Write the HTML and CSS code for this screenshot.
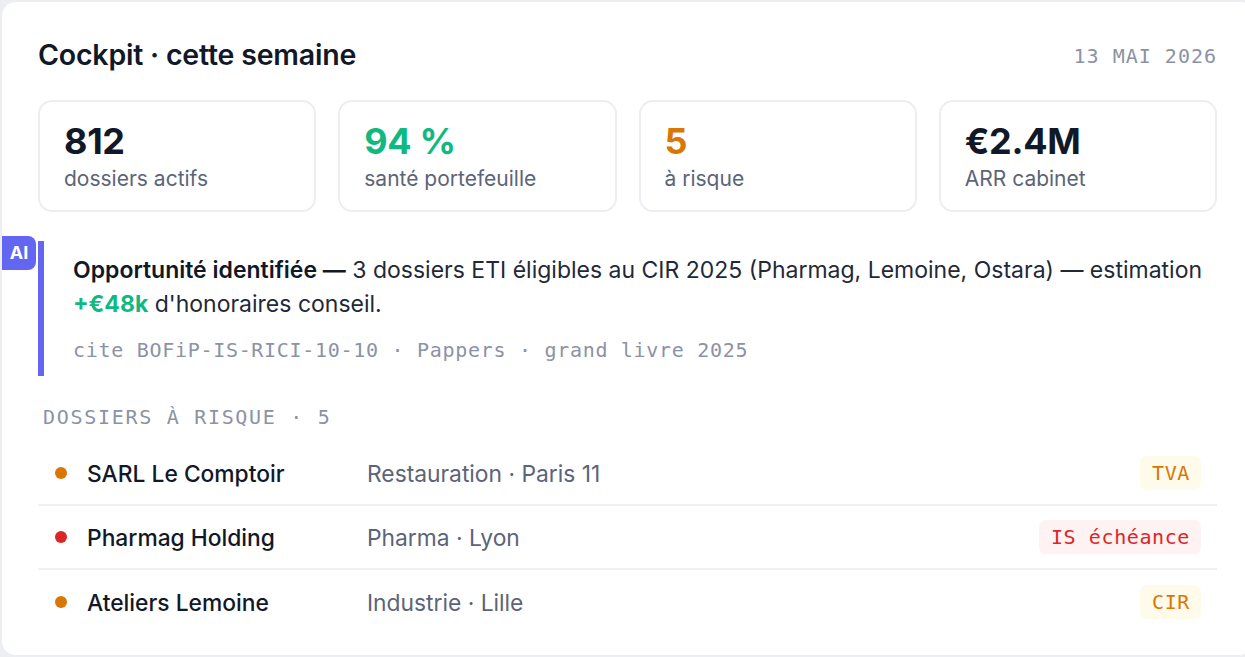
FILE: index.html
```html
<!DOCTYPE html>
<html lang="fr">
<head>
    <meta charset="UTF-8">
    <title>Cockpit · cette semaine</title>
    <link rel="stylesheet" href="styles.css">
</head>
<body>
    <div class="card">
        <div class="header">
            <h1>Cockpit · cette semaine</h1>
            <div class="date">13 MAI 2026</div>
        </div>

        <div class="stats">
            <div class="stat">
                <div class="stat-value">812</div>
                <div class="stat-label">dossiers actifs</div>
            </div>
            <div class="stat">
                <div class="stat-value green">94 %</div>
                <div class="stat-label">santé portefeuille</div>
            </div>
            <div class="stat">
                <div class="stat-value orange">5</div>
                <div class="stat-label">à risque</div>
            </div>
            <div class="stat">
                <div class="stat-value">€2.4M</div>
                <div class="stat-label">ARR cabinet</div>
            </div>
        </div>

        <div class="insight">
            <span class="ai-badge">AI</span>
            <p class="insight-text">
                <strong>Opportunité identifiée —</strong> 3 dossiers ETI éligibles au CIR 2025 (Pharmag, Lemoine, Ostara) — estimation
                <span class="gain">+€48k</span> d'honoraires conseil.
            </p>
            <div class="cite">cite BOFiP-IS-RICI-10-10 · Pappers · grand livre 2025</div>
        </div>

        <div class="section-label">DOSSIERS À RISQUE · 5</div>

        <div class="rows">
            <div class="row">
                <span class="dot orange-bg"></span>
                <span class="name">SARL Le Comptoir</span>
                <span class="sector">Restauration · Paris 11</span>
                <span class="tag tag-warn">TVA</span>
            </div>
            <div class="row">
                <span class="dot red-bg"></span>
                <span class="name">Pharmag Holding</span>
                <span class="sector">Pharma · Lyon</span>
                <span class="tag tag-danger">IS échéance</span>
            </div>
            <div class="row">
                <span class="dot orange-bg"></span>
                <span class="name">Ateliers Lemoine</span>
                <span class="sector">Industrie · Lille</span>
                <span class="tag tag-warn">CIR</span>
            </div>
        </div>
    </div>
</body>
</html>
```

FILE: styles.css
```css
body {
    margin: 0;
    padding: 0;
    background: #eceef2;
    font-family: Inter, "Noto Sans", sans-serif;
    color: #111827;
    overflow: hidden;
}

.card {
    box-sizing: border-box;
    width: 1251px;
    height: 653px;
    margin: 2px 0 0 2px;
    padding: 36px 36px 0 36px;
    background: #fff;
    border-radius: 14px;
}

.header {
    display: flex;
    justify-content: space-between;
    align-items: center;
    height: 34px;
}

h1 {
    margin: 0;
    font-size: 28.5px;
    font-weight: 600;
    line-height: 34px;
    letter-spacing: -0.2px;
}

.date {
    font-family: "DejaVu Sans Mono", monospace;
    font-size: 20px;
    letter-spacing: 1px;
    color: #8b92a5;
    margin-top: 2px;
}

.stats {
    display: grid;
    grid-template-columns: repeat(4, 1fr);
    gap: 22px;
    margin-top: 28px;
}

.stat {
    height: 112px;
    box-sizing: border-box;
    border: 2px solid #eceef2;
    border-radius: 14px;
    padding: 18px 24px 0;
}

.stat-value {
    font-size: 36px;
    font-weight: 700;
    line-height: 42px;
    letter-spacing: -0.3px;
}

.stat-label {
    font-size: 21px;
    line-height: 28px;
    color: #5b6478;
    margin-top: 3px;
}

.green { color: #10b981; }
.orange { color: #d97706; }

.insight {
    position: relative;
    margin-top: 29px;
    border-left: 6px solid #6366f1;
    padding: 12px 6px 13px 29px;
}

.ai-badge {
    position: absolute;
    left: -42px;
    top: -5px;
    width: 34px;
    height: 34px;
    line-height: 34px;
    text-align: center;
    background: #6366f1;
    color: #fff;
    font-weight: 700;
    font-size: 18px;
    border-radius: 0 8px 8px 0;
}

.insight-text {
    margin: 0;
    font-size: 23px;
    line-height: 34px;
    color: #1f2937;
}

.insight-text strong {
    font-weight: 600;
    color: #111827;
}

.gain {
    color: #10b981;
    font-weight: 700;
}

.cite {
    margin-top: 16px;
    font-family: "DejaVu Sans Mono", monospace;
    font-size: 20px;
    line-height: 26px;
    letter-spacing: 0.7px;
    color: #8b92a5;
}

.section-label {
    margin-top: 28px;
    padding-left: 5px;
    font-family: "DejaVu Sans Mono", monospace;
    font-size: 20px;
    line-height: 26px;
    letter-spacing: 1.7px;
    color: #8b92a5;
}

.rows {
    margin-top: 12px;
}

.row {
    box-sizing: border-box;
    display: flex;
    align-items: center;
    height: 64px;
    padding: 0 16px 0 17px;
    border-bottom: 2px solid #eef0f4;
}

.row:last-child {
    border-bottom: none;
}

.dot {
    width: 12px;
    height: 12px;
    border-radius: 50%;
    margin-right: 20px;
    flex-shrink: 0;
}

.orange-bg { background: #d97706; }
.red-bg { background: #dc2626; }

.name {
    width: 280px;
    font-size: 22.8px;
    font-weight: 500;
    color: #111827;
}

.sector {
    flex: 1;
    font-size: 22.8px;
    color: #5b6478;
}

.tag {
    font-family: "DejaVu Sans Mono", monospace;
    font-size: 20px;
    letter-spacing: 0.6px;
    line-height: 34px;
    padding: 0 11px 0 12px;
    border-radius: 7px;
}

.tag-warn {
    background: #fffbeb;
    color: #d97706;
}

.tag-danger {
    background: #fef2f2;
    color: #dc2626;
}
```
